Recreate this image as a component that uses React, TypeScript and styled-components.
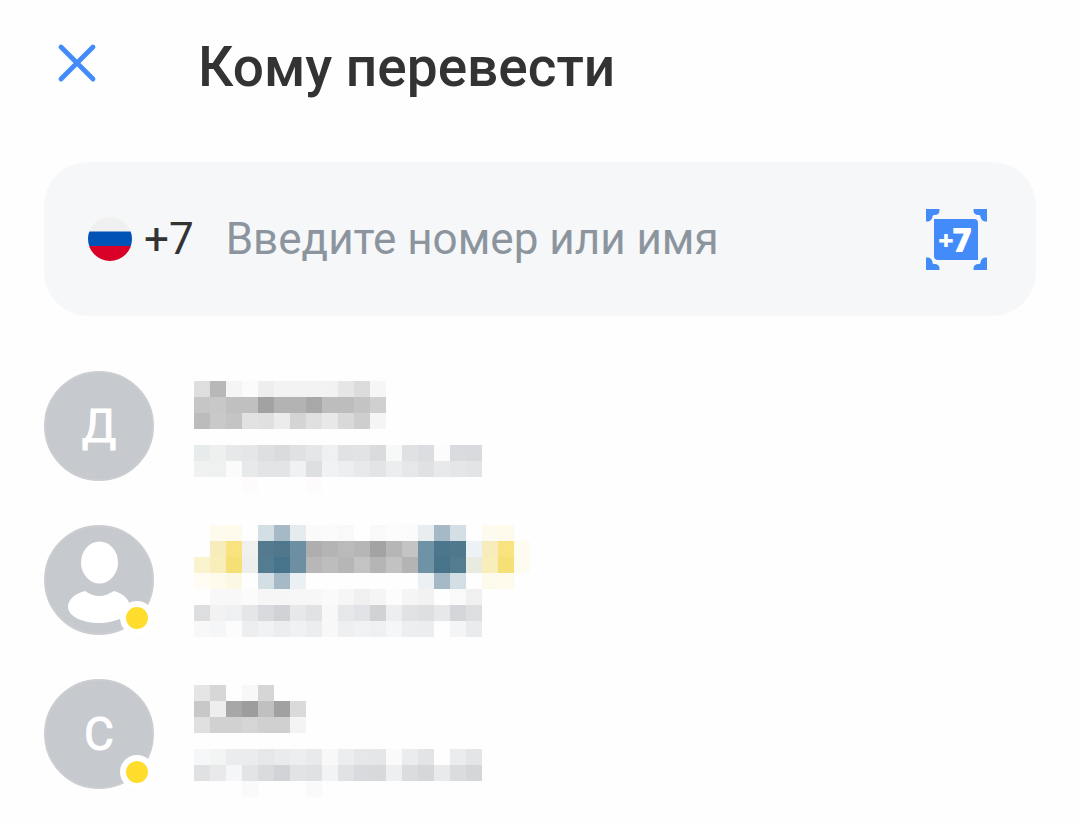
import React from "react";
import styled, { createGlobalStyle } from "styled-components";

const GlobalStyle = createGlobalStyle`
  *, *::before, *::after { box-sizing: border-box; }
  body {
    margin: 0;
    background: #fefefe;
    color: #333333;
    font-family: Roboto, "Liberation Sans", sans-serif;
  }
`;

const Page = styled.main`
  padding: 34px 44px 24px;
`;

const Header = styled.header`
  display: flex;
  align-items: center;
  gap: 96px;
  height: 66px;
  padding-left: 8px;
  margin-bottom: 62px;
`;

const IconButton = styled.button`
  display: flex;
  flex: none;
  padding: 0;
  border: 0;
  background: none;
  cursor: pointer;
`;

const Title = styled.h1`
  margin: 0;
  font-size: 55px;
  line-height: 72px;
  font-weight: 500;
`;

const SearchBar = styled.form`
  display: flex;
  align-items: center;
  height: 154px;
  padding: 0 49px 0 44px;
  border-radius: 44px;
  background: #f5f7f9;
  margin-bottom: 55px;
`;

const Prefix = styled.label`
  display: flex;
  align-items: center;
  gap: 12px;
  font-size: 44px;
  line-height: 56px;
`;

const SearchInput = styled.input`
  flex: 1;
  min-width: 0;
  height: 64px;
  margin-left: 32px;
  padding: 0;
  border: 0;
  outline: 0;
  background: none;
  color: #333333;
  font: 400 44px/56px Roboto, "Liberation Sans", sans-serif;

  &::placeholder {
    color: #8c959e;
    opacity: 1;
  }
`;

const ContactList = styled.ul`
  display: flex;
  flex-direction: column;
  gap: 44px;
  margin: 0;
  padding: 0;
  list-style: none;
`;

const ContactRow = styled.li`
  display: flex;
  align-items: flex-start;
  gap: 40px;
  height: 110px;
`;

const Avatar = styled.div`
  position: relative;
  display: flex;
  align-items: center;
  justify-content: center;
  flex: none;
  width: 110px;
  height: 110px;
  border: 2px solid #cbcdd0;
  border-radius: 50%;
  background: #c6c9ce;
  color: #ffffff;
  font-size: 46px;
  line-height: 56px;
  font-weight: 400;
  -webkit-text-stroke: 1px #ffffff;
  stroke-linejoin: round;
`;

const Badge = styled.span`
  position: absolute;
  right: -2px;
  bottom: -2px;
  width: 34px;
  height: 34px;
  border: 6px solid #ffffff;
  border-radius: 50%;
  background: #ffdd2d;
`;

const Mosaic = styled.svg`
  flex: none;
  overflow: visible;
`;

const CELL = 16;

type Contact = {
  id: string;
  letter?: string;
  badge: boolean;
  top: number;
  cells: string[];
};

// Two hex digits are a grey, six are a full colour, "--" is an empty cell.
const contacts: Contact[] = [
  {
    id: "d",
    letter: "Д",
    badge: false,
    top: 10,
    cells: [
      "de b8 f5 fb ee f3 f3 f3 f2 e6 dc f6",
      "c6 c8 c0 c0 a2 b3 b3 a8 bd bd c4 d0",
      "bc c9 c4 e2 e0 ec d4 e0 e8 d9 ce f5",
      "--",
      "e8ebeb eeefef e6e8e9 e4e6e8 dddfe1 d9dbdd dfe1e3 e4e6e8 eff0f1 e0e2e4 e1e3e5 d9dbdd f7f8f8 dfe1e3 dbdde0 fc d9dbde d8dadd",
      "f0f1f1 eff0f0 fb e7e9ea e2e4e6 e2e4e6 f0f1f2 dddfe1 f1f2f3 eceeef e7e9ea e2e4e6 ebedef e5e7e9 dfe1e3 e7e9eb e4e6e8 e2e4e6",
      "-- -- -- fdfbfc -- -- -- fdfbfc",
    ],
  },
  {
    id: "person",
    badge: true,
    top: 0,
    cells: [
      "-- fefbed fefbed -- d4dfe5 a5bac6 e5ebef fa fb f9 -- f9 fc fb e8edf0 a5bac6 d4dfe5 -- fdfaef fefbed",
      "-- f7edbc f9e37e f0f1ee 55798f 50788d 6c8fa2 ae b4 ba b6 a3 b6 c4 7092a5 4b768c 50788d edf2f6 f7edbc f9e37e fefcf0",
      "fbf3cf f8eeb9 f5df77 eeefed 547c91 48748b 6c8fa2 b7 bd b6 c3 b5 c2 b4 7092a5 48748b 547c91 e8ebdf f8eeb9 f5df77 fefcf0",
      "fefcf3 fefaec fdf8e4 -- d4dfe5 a5bac6 eaf0f3 -- -- -- -- -- -- -- eaf0f3 a5bac6 d4dfe5 -- fdfaec fefaec",
      "-- f8 f8 fb f6 f6 f7 f7 fa f6 f0f0f1 f5 fc f5 f2f2f3 -- f9 f0f0f1",
      "dddee0 f2f2f3 eff0f1 e5e6e8 d9dadd d1d2d5 e7e8e9 e0e2e4 f8f8f8 e5e7e9 e2e3e6 d1d2d4 eceef0 e0e2e4 dddfe1 e6e8ea d5d6d9 dcdee0",
      "f8f8f9 f5f6f7 fc edeeef f1f2f3 ebedef f0f1f2 ebedee f8 eeeff1 f1f2f3 eff0f1 f5f6f7 edeeef ecedef -- f4f5f6 e9ebed",
    ],
  },
  {
    id: "s",
    letter: "С",
    badge: true,
    top: 6,
    cells: [
      "e5 d7 -- f8 d6",
      "c8 ee a7 9d c0 a1 da",
      "e0 d1 d1 d5 d0 d0 f4",
      "--",
      "f6f7f8 f3f4f4 ebeced ebeced e6e7e9 eaebec edeeef e8eaeb f8 ecedef e5e7e8 e5e6e8 fa ebecee e3e4e6 -- ebecee e4e5e7",
      "dfe1e3 e9e9eb f4f6f8 e2e4e6 d9dbdd d2d3d6 e1e3e5 dfe1e3 f1f3f5 e0e2e4 d9dadd d8d9db edeff0 dadcde d6d7d9 e8eaec dadcde d5d6d8",
      "-- -- -- fa -- -- -- fa",
    ],
  },
];

function toFill(code: string) {
  return code.length === 2 ? `#${code}${code}${code}` : `#${code}`;
}

function HiddenText({ top, cells }: { top: number; cells: string[] }) {
  return (
    <Mosaic width={336} height={110} shapeRendering="crispEdges" aria-hidden="true">
      {cells.flatMap((line, row) =>
        line.split(" ").map((code, col) =>
          code === "--" ? null : (
            <rect
              key={`${row}-${col}`}
              x={col * CELL}
              y={top + row * CELL}
              width={CELL}
              height={CELL}
              fill={toFill(code)}
            />
          ),
        ),
      )}
    </Mosaic>
  );
}

function CloseIcon() {
  return (
    <svg width="50" height="50" viewBox="0 0 50 50" fill="none" aria-hidden="true">
      <path d="M9 5L41 37M41 5L9 37" stroke="#428bf9" strokeWidth="4.800" strokeLinecap="round" />
    </svg>
  );
}

function FlagIcon() {
  return (
    <svg width="44" height="44" viewBox="0 0 44 44" aria-hidden="true">
      <clipPath id="flag-round">
        <circle cx="22" cy="22" r="22" />
      </clipPath>
      <g clipPath="url(#flag-round)">
        <path d="M0 0h44v14.500H0z" fill="#f0f0f0" />
        <path d="M0 14.500h44V29H0z" fill="#0052b4" />
        <path d="M0 29h44v15H0z" fill="#d80027" />
      </g>
    </svg>
  );
}

const CORNER = "M0 0H13.500V1.500C13.500 4.500 11.500 6 8.500 6H8Q6.500 6 6.500 7.500V8C6 10.500 4 12.500 1.500 12.500H0Z";

function ScanIcon() {
  return (
    <svg width="61" height="61" viewBox="0 0 61 61" fill="#428bf9" aria-hidden="true">
      <path d={CORNER} />
      <path d={CORNER} transform="translate(61 0) scale(-1 1)" />
      <path d={CORNER} transform="translate(0 61) scale(1 -1)" />
      <path d={CORNER} transform="translate(61 61) scale(-1 -1)" />
      <path d="M8 10H48Q52 10 52 14V51H12Q8 51 8 47Z" />
      <text fill="#ffffff" fontFamily='"Open Sans", sans-serif' fontWeight="800" fontSize="34">
        <tspan fontSize="27" x="12" y="41">+</tspan>
        <tspan x="26" y="43">7</tspan>
      </text>
    </svg>
  );
}

function PersonIcon() {
  return (
    <svg width="106" height="106" viewBox="0 0 106 106" fill="#ffffff" aria-hidden="true">
      <ellipse cx="53.500" cy="35.500" rx="18.500" ry="21" />
      <path d="M39 64C28 67 22 73 22 80C22 89 36 96 53 96C70 96 84 89 84 80C84 73 78 67 68 64C63 67 58 69 53.500 69C49 69 43 67 39 64Z" />
    </svg>
  );
}

export default function App() {
  return (
    <>
      <GlobalStyle />
      <Page>
        <Header>
          <IconButton type="button" aria-label="Закрыть">
            <CloseIcon />
          </IconButton>
          <Title>Кому перевести</Title>
        </Header>
        <SearchBar onSubmit={(event) => event.preventDefault()}>
          <Prefix htmlFor="recipient">
            <FlagIcon />
            +7
          </Prefix>
          <SearchInput id="recipient" type="text" placeholder="Введите номер или имя" />
          <IconButton type="button" aria-label="Сканировать номер">
            <ScanIcon />
          </IconButton>
        </SearchBar>
        <ContactList>
          {contacts.map((contact) => (
            <ContactRow key={contact.id}>
              <Avatar>
                {contact.letter ?? <PersonIcon />}
                {contact.badge && <Badge />}
              </Avatar>
              <HiddenText top={contact.top} cells={contact.cells} />
            </ContactRow>
          ))}
        </ContactList>
      </Page>
    </>
  );
}
